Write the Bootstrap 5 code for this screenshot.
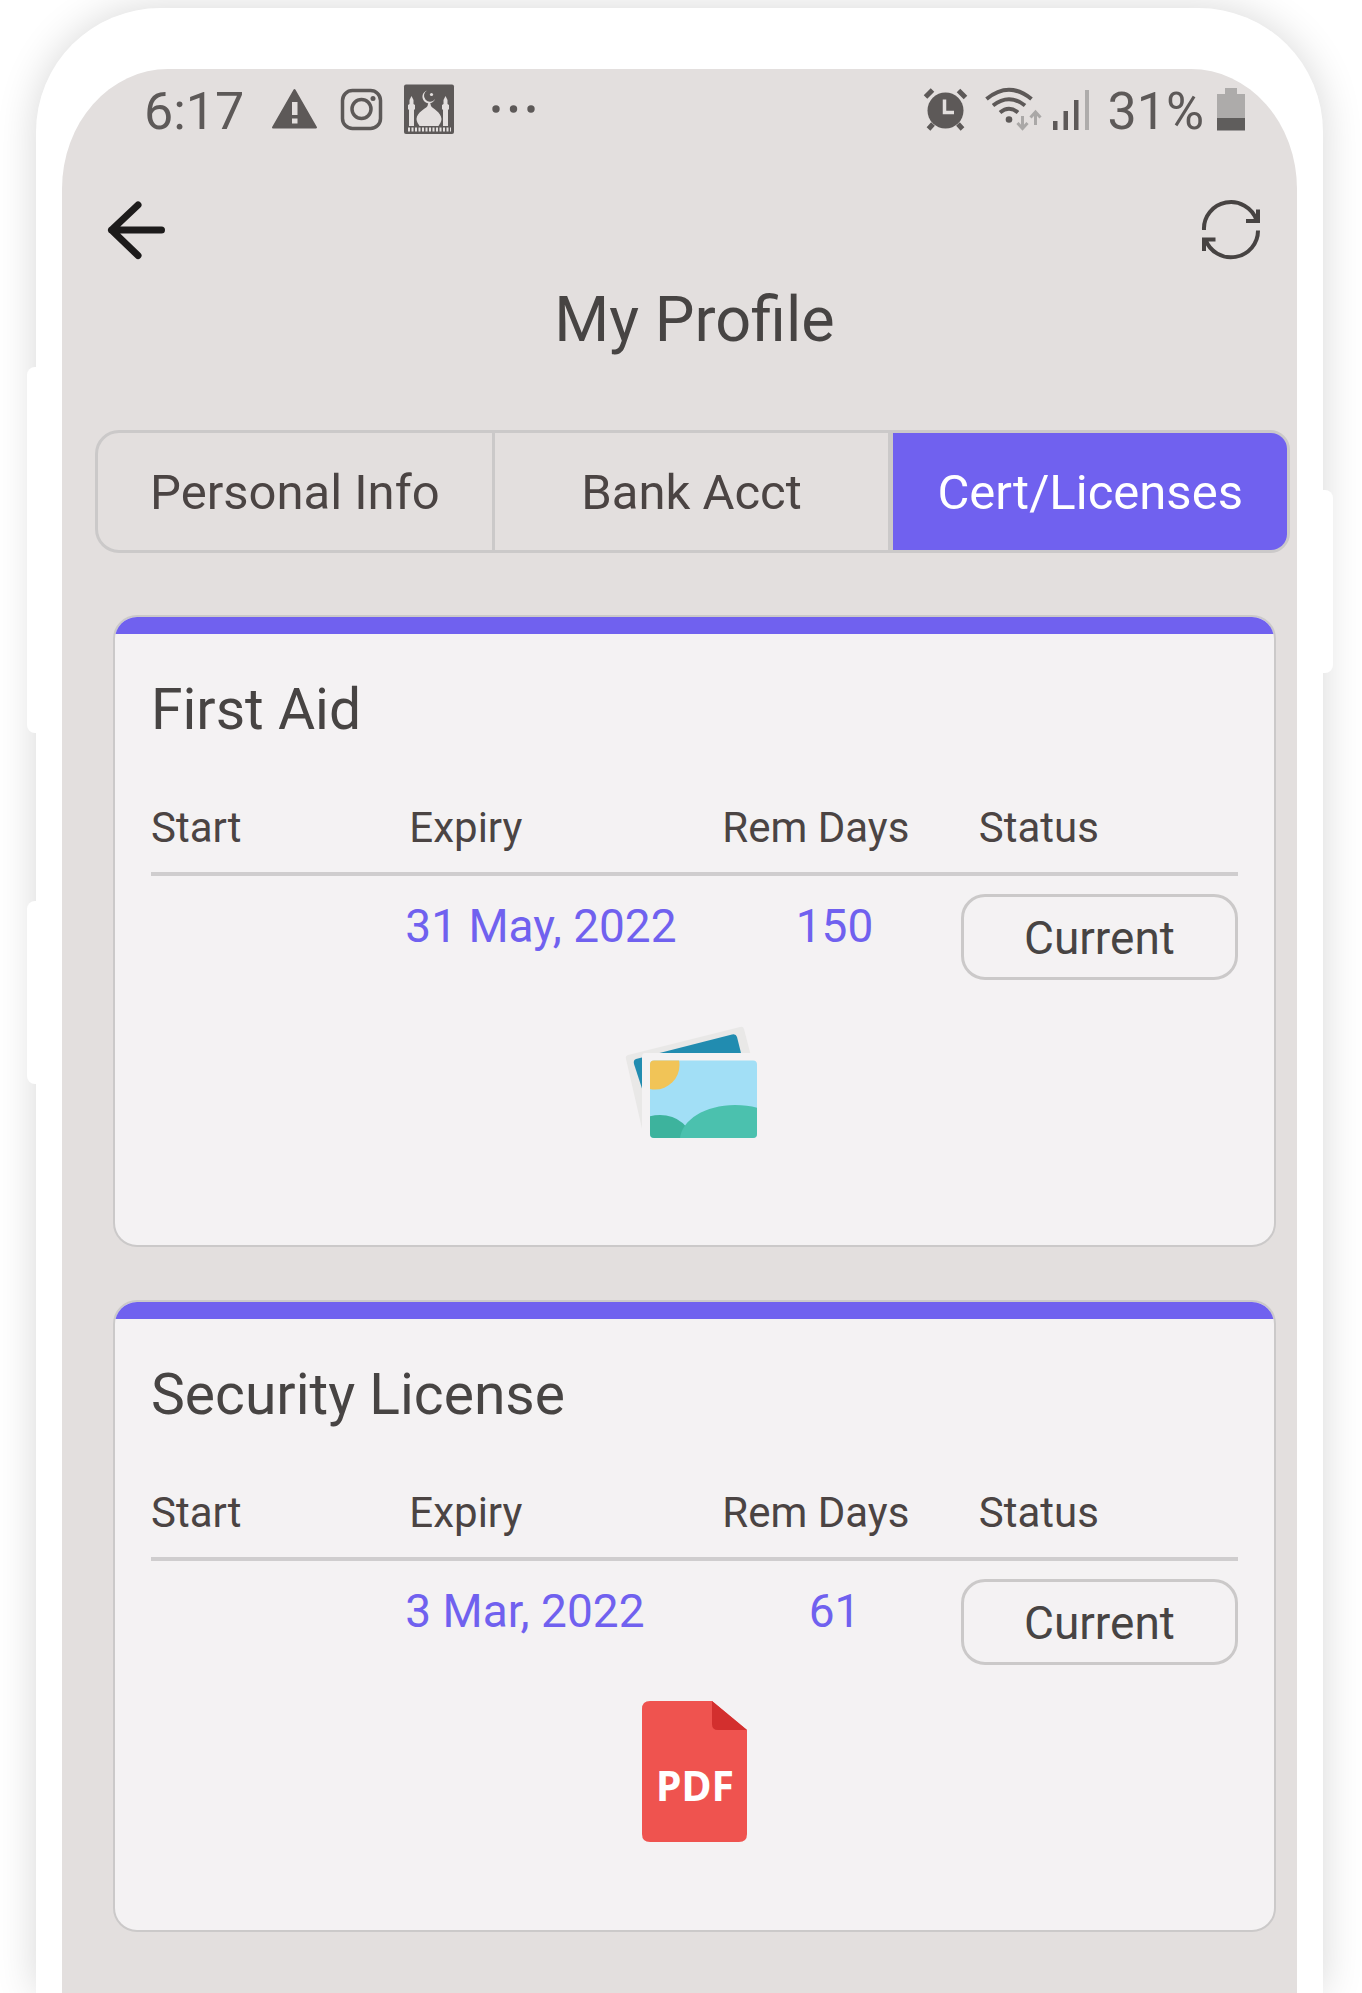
<!DOCTYPE html>
<html lang="en">
<head>
<meta charset="utf-8">
<meta name="viewport" content="width=device-width, initial-scale=1">
<title>My Profile</title>
<link href="https://cdn.jsdelivr.net/npm/bootstrap@5.3.0/dist/css/bootstrap.min.css" rel="stylesheet">
<style>
  :root { --ink: #474443; --line: #cbc9c9; --accent: #7061ef; --screen: #e3dfde; }
  body { font-family: Roboto, "Liberation Sans", sans-serif; color: var(--ink); background: #fff; overflow-x: hidden; }
  svg { display: block; flex: none; }

  /* phone */
  .stage { min-height: 100vh; padding: 8px 39px 0 36px; overflow: hidden; }
  .phone { padding: 61px 26px 0; background: #fff; border-radius: 124px 124px 0 0; box-shadow: 0 0 40px rgba(0, 0, 0, .16); }
  .phone-key { position: absolute; width: 10px; background: #fff; }
  .phone-key.left { left: -9px; border-radius: 8px 0 0 8px; }
  .phone-key.right { right: -10px; border-radius: 0 8px 8px 0; }
  .volume-up { top: 359px; height: 366px; }
  .volume-down { top: 893px; height: 183px; }
  .power { top: 482px; height: 183px; }
  .screen { background: var(--screen); border-radius: 106px 106px 0 0 / 120px 120px 0 0; padding: 13px 0 48px; }

  /* status bar and header */
  .status-bar { padding: 0 52px 0 82px; font-size: 52px; line-height: 60px; color: #5d5958; }
  .status-left { gap: 18px; }
  .status-right { gap: 8px; }
  .top-bar { margin-top: 58px; padding: 0 36px 0 45px; }
  .page-title { margin: 24px 23px 0 53px; font-size: 63px; line-height: 72px; font-weight: 400; }

  /* tabs */
  .tab-strip { margin: 74px 7px 0 33px; border: 3px solid var(--line); border-radius: 24px 20px 20px 24px; }
  .tab-strip .nav-link { padding: 30px 0 27px; font-size: 49px; line-height: 60px; color: #4b4443; background: transparent; border: 0; border-left: 3px solid var(--line); border-radius: 0; }
  .tab-strip .nav-link:first-child { border-left: 0; }
  .tab-strip .nav-link.active { color: #fff; background: var(--accent); background-clip: padding-box; border-left-width: 5px; border-radius: 0 16px 16px 0; }

  /* certificates */
  .cert-list { margin: 62px 21px 0 51px; gap: 53px; }
  .cert { --bs-card-bg: #f4f2f3; border: 2px solid var(--line); border-radius: 24px; overflow: hidden; }
  .cert-stripe { height: 17px; background: var(--accent); }
  .cert-body { padding: 44px 36px 80px; }
  .cert-title { font-size: 57px; line-height: 64px; font-weight: 400; margin-bottom: 62px; }
  .cert-table { --bs-table-bg: transparent; table-layout: fixed; color: var(--ink); margin-bottom: 29px; }
  .cert-table thead tr { border-bottom: 4px solid #cfcdce; }
  .cert-table th { padding: 0 0 20px; font-size: 42px; line-height: 48px; font-weight: 400; color: #4b4443; white-space: nowrap; }
  .cert-table td { padding: 22px 0 0; font-size: 46px; line-height: 56px; color: var(--accent); white-space: nowrap; }
  .cert-table th.indent { padding-left: 18px; }
  .cert-table th.indent-sm { padding-left: 4px; }
  .cert-table td.days-left { padding-left: 4px; }
  .cert-table td.cert-state { padding-top: 18px; }
  .btn-state { padding: 13px 0 11px; border: 3px solid var(--line); border-radius: 24px; font-size: 46px; line-height: 56px; color: var(--ink); }
  .col-start { width: 23.4%; } .col-expiry { width: 27.5%; } .col-days { width: 23.6%; } .col-state { width: 25.5%; }
</style>
</head>
<body>
<div class="stage d-flex flex-column">
<main class="phone position-relative d-flex flex-column flex-grow-1">
  <span class="phone-key left volume-up"></span>
  <span class="phone-key left volume-down"></span>
  <span class="phone-key right power"></span>

  <div class="screen flex-grow-1">
    <div class="status-bar d-flex justify-content-between align-items-center">
      <div class="status-left d-flex align-items-center">
        <span>6:17</span>
        <svg width="59" height="60" viewBox="262 82 59 60" aria-hidden="true"><path d="M294.500 90 316 127.500H273Z" fill="#5d5958" stroke="#5d5958" stroke-width="2" stroke-linejoin="round"/><path d="M292 102h5.500v13H292zM292 118.500h5.500v5H292z" fill="#e3dfde"/></svg>
        <svg width="45" height="60" viewBox="339 82 45 60" fill="none" stroke="#5d5958" aria-hidden="true"><rect x="342.500" y="90.500" width="38" height="38" rx="10" stroke-width="3.500"/><circle cx="361.500" cy="109" r="9.500" stroke-width="3.500"/><circle cx="373" cy="98.500" r="2.500" fill="#5d5958" stroke="none"/></svg>
        <svg width="54" height="60" viewBox="402 82 54 60" aria-hidden="true"><rect x="404" y="84.500" width="50" height="49.500" rx="2" fill="#5d5958"/><g fill="#e3dfde"><path d="M427 90.500a6.500 6.500 0 1 0 8 8.500 6 6 0 1 1-8-8.500Z"/><circle cx="431.500" cy="94.500" r="1.600"/><path d="M428.500 102h1.500l1 4c2 3 10 6 10.500 13 0 3-2 5-3 7h-19c-1-2-3-4-3-7 .5-7 9-10 11-13Z"/><path d="M411.500 96l2 4v4l1.500 1v4l-1 1v16h-5v-16l-1-1v-4l1.500-1v-4ZM445.500 96l2 4v4l1.500 1v4l-1 1v16h-5v-16l-1-1v-4l1.500-1v-4Z"/></g><path d="M408 129.500h43" stroke="#e3dfde" stroke-width="4" stroke-dasharray="2 1.500"/></svg>
        <svg width="62" height="60" viewBox="474 82 62 60" fill="#5d5958" aria-hidden="true"><circle cx="496" cy="109" r="3.700"/><circle cx="513.500" cy="109" r="3.700"/><circle cx="531" cy="109" r="3.700"/></svg>
      </div>
      <div class="status-right d-flex align-items-center">
        <svg width="48" height="60" viewBox="922 82 48 60" fill="none" stroke="#5d5958" aria-hidden="true"><circle cx="945.500" cy="110.500" r="18" fill="#5d5958" stroke="none"/><path d="M925.500 97l7-7M958.500 90.500l7 7M933 124l-4.500 5M958 124l4.500 5" stroke-width="5"/><path d="M944.500 99.500v13h9.500" stroke="#e3dfde" stroke-width="3.500"/></svg>
        <svg width="64" height="60" viewBox="978 82 64 60" fill="none" stroke="#5d5958" aria-hidden="true"><path d="M986.500 99q22.500-18.500 45 0M993 105.500q16-12.500 32 0M1000 112.500q9-7.500 18 0" stroke-width="4"/><circle cx="1009" cy="119.500" r="3.300" fill="#5d5958" stroke="none"/><path d="M1022.500 116v12M1017.500 123l5 5.500 5-5.500M1035.500 125v-12M1030.500 117.500l5-5.500 5 5.500" stroke="#aaa8a7" stroke-width="3"/></svg>
        <svg width="49" height="60" viewBox="1050 82 49 60" fill="#5d5958" aria-hidden="true"><rect x="1053" y="121" width="4.500" height="9"/><rect x="1063.500" y="111" width="4.500" height="19"/><rect x="1074" y="100" width="4.500" height="30"/><rect x="1085" y="90" width="4" height="40" fill="#aeacab"/></svg>
        <span>31%</span>
        <svg width="33" height="60" viewBox="1212 82 33 60" aria-hidden="true"><path d="M1225 88h12v6h8v24h-28V94h8Z" fill="#adabaa"/><rect x="1217" y="118" width="28" height="12.500" fill="#5f5d5c"/></svg>
      </div>
    </div>

    <div class="top-bar d-flex justify-content-between">
      <button type="button" class="btn p-0 border-0" aria-label="Back"><svg width="60" height="60" viewBox="107 200 60 60" fill="none" stroke="#1d1b1b" stroke-width="7" stroke-linecap="round" stroke-linejoin="round"><path d="M138 205 111.500 230 138 255.500M111.500 230H161.500"/></svg></button>
      <button type="button" class="btn p-0 border-0" aria-label="Refresh"><svg width="60" height="60" viewBox="1201 200 60 60" fill="none" stroke="#474342" stroke-width="4"><path d="M1204 230A27 26.500 0 0 1 1256.500 220M1258 230.500A27 26.500 0 0 1 1205.500 239.500"/><path d="M1258 209.500V221H1246M1204 251V239.500H1215.500"/></svg></button>
    </div>

    <h1 class="page-title text-center">My Profile</h1>

    <nav class="tab-strip nav nav-justified flex-nowrap" aria-label="Profile sections">
      <button type="button" class="nav-link">Personal Info</button>
      <button type="button" class="nav-link">Bank Acct</button>
      <button type="button" class="nav-link active" aria-current="page">Cert/Licenses</button>
    </nav>

    <div class="cert-list d-flex flex-column">
      <section class="card cert">
        <div class="cert-stripe"></div>
        <div class="cert-body">
          <h2 class="cert-title">First Aid</h2>
          <table class="table table-borderless cert-table">
            <colgroup><col class="col-start"><col class="col-expiry"><col class="col-days"><col class="col-state"></colgroup>
            <thead><tr><th scope="col">Start</th><th scope="col" class="indent-sm">Expiry</th><th scope="col" class="indent">Rem Days</th><th scope="col" class="indent">Status</th></tr></thead>
            <tbody><tr><td></td><td>31 May, 2022</td><td class="days-left text-center">150</td><td class="cert-state"><button type="button" class="btn btn-state w-100 d-block">Current</button></td></tr></tbody>
          </table>
          <button type="button" class="btn p-0 border-0 d-block mx-auto" aria-label="Open image">
            <svg width="160" height="156" viewBox="615 1010 160 156">
              <path d="M628 1056 740 1028Q743 1027 744 1030L757 1080 643 1134 626 1060Q625 1057 628 1056Z" fill="#e9e8e7"/>
              <path d="M636 1060 732 1035.500Q736 1034.500 737 1038L748 1082 650 1114 634 1065Q633 1061 636 1060Z" fill="#218cb0"/>
              <path d="M645 1054H760Q764 1054 764 1058V1143H642V1058Q642 1054 645 1054Z" fill="#f4f2f3"/>
              <clipPath id="photo"><rect x="650" y="1061.500" width="107" height="77.500" rx="4"/></clipPath>
              <g clip-path="url(#photo)"><rect x="650" y="1061" width="107" height="78" fill="#a2dff6"/><circle cx="655" cy="1066" r="24.500" fill="#f1c457"/><ellipse cx="660" cy="1143" rx="32" ry="27" fill="#3db39d"/><path d="M680 1139C682 1121 705 1106 735 1106Q748 1106 758 1109V1139Z" fill="#4bc1ae"/></g>
            </svg>
          </button>
        </div>
      </section>

      <section class="card cert">
        <div class="cert-stripe"></div>
        <div class="cert-body">
          <h2 class="cert-title">Security License</h2>
          <table class="table table-borderless cert-table">
            <colgroup><col class="col-start"><col class="col-expiry"><col class="col-days"><col class="col-state"></colgroup>
            <thead><tr><th scope="col">Start</th><th scope="col" class="indent-sm">Expiry</th><th scope="col" class="indent">Rem Days</th><th scope="col" class="indent">Status</th></tr></thead>
            <tbody><tr><td></td><td>3 Mar, 2022</td><td class="days-left text-center">61</td><td class="cert-state"><button type="button" class="btn btn-state w-100 d-block">Current</button></td></tr></tbody>
          </table>
          <button type="button" class="btn p-0 border-0 d-block mx-auto" aria-label="Open PDF">
            <svg width="160" height="156" viewBox="615 1695 160 156">
              <path d="M650 1702H712L747 1731V1835Q747 1843 739 1843H650Q642 1843 642 1835V1710Q642 1702 650 1702Z" fill="#ef534f"/>
              <path d="M712 1702 747 1731H718Q712 1731 712 1725Z" fill="#d32f2e"/>
              <text x="695" y="1802" text-anchor="middle" font-family="Noto Sans, Open Sans, sans-serif" font-weight="700" font-size="41" fill="#fff">PDF</text>
            </svg>
          </button>
        </div>
      </section>
    </div>
  </div>
</main>
</div>
<script src="https://cdn.jsdelivr.net/npm/bootstrap@5.3.0/dist/js/bootstrap.bundle.min.js"></script>
</body>
</html>
